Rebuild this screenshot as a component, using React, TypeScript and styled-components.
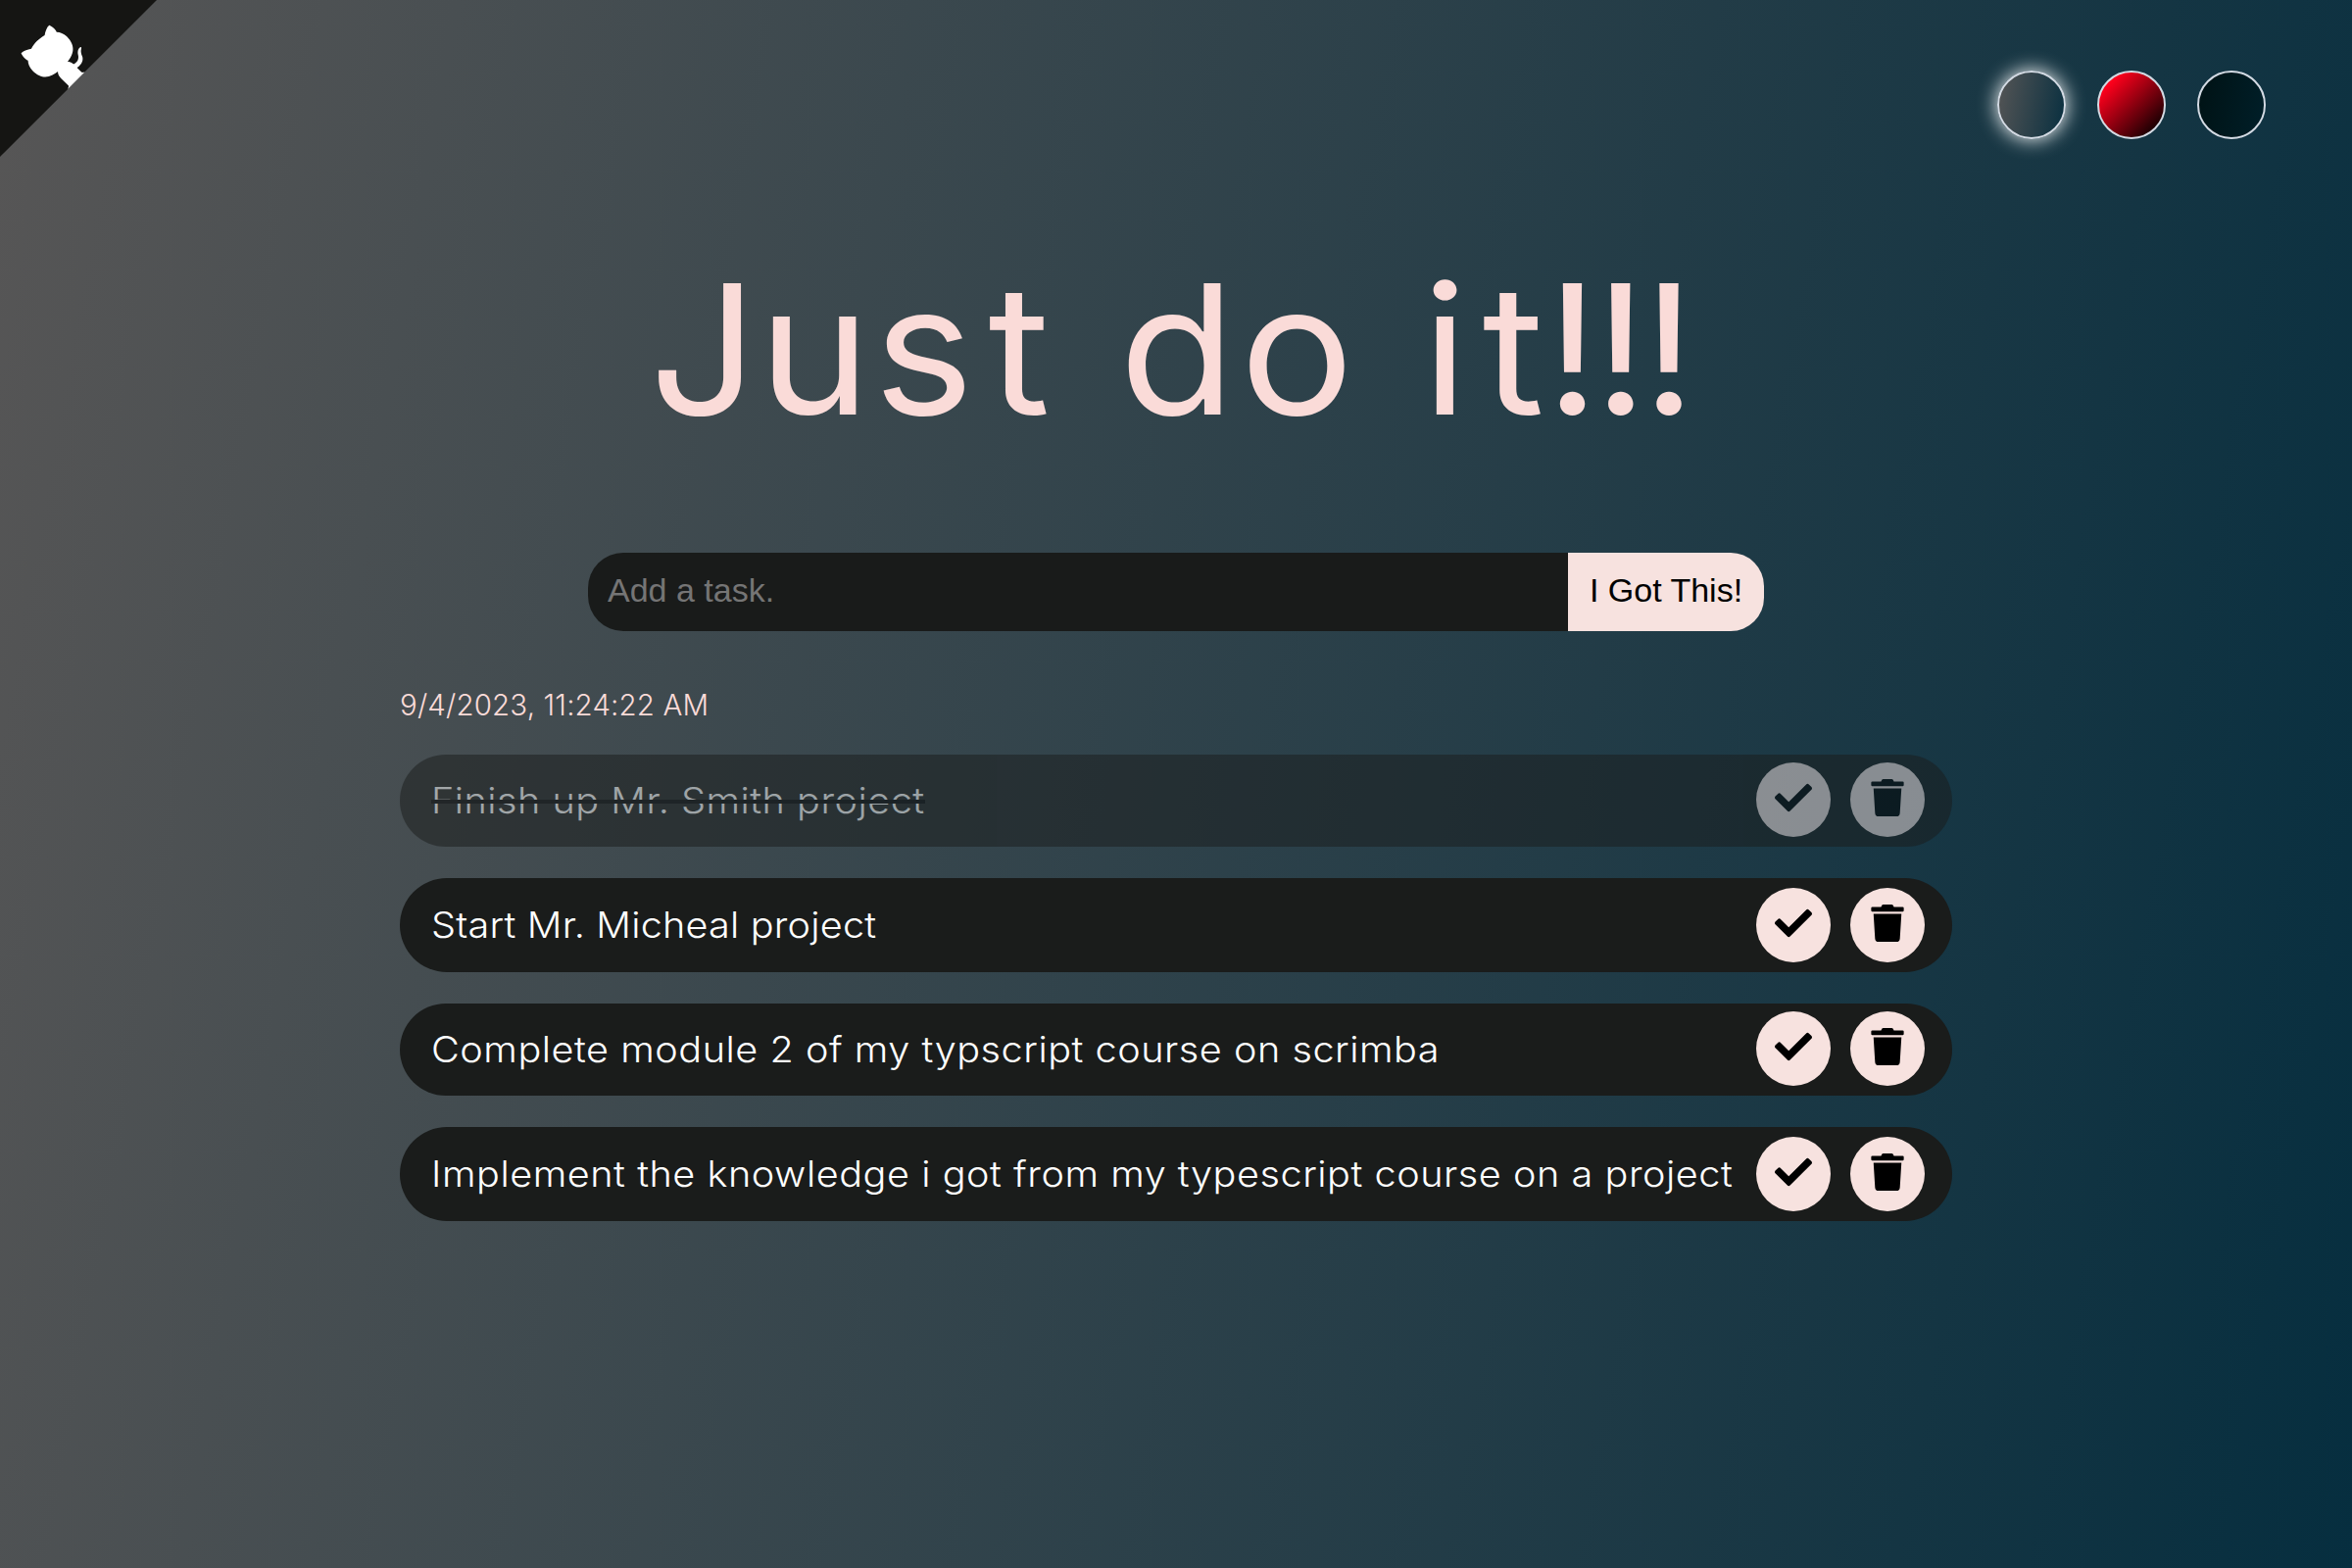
import React, { useState } from "react";
import styled, { createGlobalStyle, css } from "styled-components";
import { FaCheck, FaTrash } from "react-icons/fa";

const GlobalStyle = createGlobalStyle`
  *, *::before, *::after { box-sizing: border-box; }
  body { margin: 0; }
`;

const palette = {
  card: "#1a1c1b",
  field: "#191b1a",
  blush: "#f7e2df",
  title: "#fadbd8",
};

const Page = styled.div`
  position: relative;
  display: flex;
  flex-direction: column;
  align-items: center;
  width: 100%;
  height: 1600px;
  overflow: hidden;
  background: linear-gradient(100deg, #575656, #062e3f);
  font-family: Inter, "Liberation Sans", sans-serif;
`;

const CornerLink = styled.a`
  position: absolute;
  top: 0;
  left: 0;
  line-height: 0;

  svg {
    width: 160px;
    height: 160px;
    fill: #151513;
    color: #fff;
    transform: scale(-1, 1);
  }
`;

const ThemeBar = styled.nav`
  display: flex;
  justify-content: flex-end;
  gap: 32px;
  width: 100%;
  padding: 72px 88px 0;
`;

const ThemeDot = styled.button<{ $fill: string; $active: boolean }>`
  width: 70px;
  height: 70px;
  padding: 0;
  border: 2px solid #d3dae3;
  border-radius: 50%;
  background: ${(p) => p.$fill};
  background-origin: border-box;
  ${(p) =>
    p.$active &&
    css`
      box-shadow: 0 0 20px #fff;
    `}
`;

const Title = styled.h1`
  display: flex;
  margin: 103px 13px 97px 0;
  color: ${palette.title};
  font-size: 184px;
  font-weight: 400;
  line-height: 222px;
  white-space: pre;
  transform: scaleX(1.05);
`;

const Word = styled.span<{ $tracking: number; $offset?: number }>`
  margin-left: ${(p) => p.$offset ?? 0}px;
  letter-spacing: ${(p) => p.$tracking}px;
`;

const TaskForm = styled.form`
  display: flex;
  width: 1200px;
  height: 80px;
`;

const TaskInput = styled.input`
  flex: 1;
  min-width: 0;
  padding: 0 20px 4px;
  border: 0;
  border-radius: 36px 0 0 36px;
  outline: 0;
  background: ${palette.field};
  color: #fff;
  font: 34px "Liberation Sans", Arial, sans-serif;

  &::placeholder {
    color: #757575;
  }
`;

const SubmitButton = styled.button`
  width: 200px;
  padding: 0 0 4px;
  border: 0;
  border-radius: 0 34px 34px 0;
  background: ${palette.blush};
  color: #000;
  font: 34px "Liberation Sans", Arial, sans-serif;
`;

const Board = styled.section`
  width: 1584px;
  margin-top: 57px;
`;

const Timestamp = styled.p`
  margin: 0 0 33px;
  color: ${palette.title};
  font-size: 29.5px;
  font-weight: 300;
  line-height: 36px;
  letter-spacing: 0.15px;
`;

const TaskList = styled.ul`
  display: flex;
  flex-direction: column;
  gap: 32px;
  margin: 0;
  padding: 0;
  list-style: none;
`;

const Actions = styled.div`
  display: flex;
  gap: 20px;
  align-self: flex-start;
  margin-left: auto;
  padding-top: 8px;
`;

const TaskRow = styled.li<{ $done: boolean }>`
  display: flex;
  align-items: center;
  height: 94px;
  padding: 0 28px 0 32px;
  border-radius: 48px;
  background: ${palette.card};
  opacity: ${(p) => (p.$done ? 0.5 : 1)};

  &:nth-child(even) {
    height: 96px;
  }

  &:nth-child(even) ${Actions} {
    padding-top: 10px;
  }
`;

const TaskText = styled.span<{ $tracking: number; $struck: boolean }>`
  position: relative;
  color: #fff;
  font-size: 37px;
  font-weight: 300;
  line-height: 44px;
  letter-spacing: ${(p) => p.$tracking}px;
  white-space: nowrap;
  transform: scaleX(1.07);
  transform-origin: left center;

  ${(p) =>
    p.$struck &&
    css`
      &::after {
        content: "";
        position: absolute;
        top: 21px;
        left: 0;
        right: 0;
        height: 4px;
        background: #000;
      }
    `}
`;

const RoundButton = styled.button`
  display: flex;
  align-items: center;
  justify-content: center;
  width: 76px;
  height: 76px;
  padding: 0 0 4px;
  border: 0;
  border-radius: 50%;
  background: ${palette.blush};
  color: #000;
  font-size: 38px;
`;

const themes = [
  { name: "standard", fill: "linear-gradient(100deg, #575656, #062e3f)" },
  { name: "red", fill: "linear-gradient(135deg, #ff001c 18%, #000 92%)" },
  { name: "darker", fill: "linear-gradient(100deg, #001214, #001f29)" },
];

const initialTasks = [
  { text: "Finish up Mr. Smith project", done: true, tracking: 0.47 },
  { text: "Start Mr. Micheal project", done: false, tracking: 0.19 },
  { text: "Complete module 2 of my typscript course on scrimba", done: false, tracking: 0.5 },
  {
    text: "Implement the knowledge i got from my typescript course on a project",
    done: false,
    tracking: 0.51,
  },
];

function GithubCorner() {
  return (
    <CornerLink aria-label="View source on GitHub">
      <svg viewBox="0 0 250 250" aria-hidden="true">
        <path d="M0,0 L115,115 L130,115 L142,142 L250,250 L250,0 Z" />
        <path
          fill="currentColor"
          d="M128.3,109.0 C113.8,99.7 119.0,89.6 119.0,89.6 C122.0,82.7 120.5,78.6 120.5,78.6 C119.2,72.0 123.4,76.3 123.4,76.3 C127.3,80.9 125.5,87.3 125.5,87.3 C122.9,97.6 130.6,101.9 134.4,103.2"
        />
        <path
          fill="currentColor"
          d="M115.0,115.0 C114.9,115.1 118.7,116.5 119.8,115.4 L133.7,101.6 C136.9,99.2 139.9,98.4 142.2,98.6 C133.8,88.0 127.5,74.4 143.8,58.0 C148.5,53.4 154.0,51.2 159.7,51.0 C160.3,49.4 163.2,43.6 171.4,40.1 C171.4,40.1 176.1,42.5 178.8,56.2 C183.1,58.6 187.2,61.8 190.9,65.4 C194.5,69.0 197.7,73.2 200.1,77.6 C213.8,80.2 216.3,84.9 216.3,84.9 C212.7,93.1 206.9,96.0 205.4,96.6 C205.1,102.4 203.0,107.8 198.3,112.5 C181.9,128.9 168.3,122.5 157.7,114.1 C157.9,116.9 156.7,120.9 152.7,124.9 L141.0,136.5 C139.8,137.7 141.6,141.9 141.8,141.8 Z"
        />
      </svg>
    </CornerLink>
  );
}

export default function App() {
  const [theme, setTheme] = useState("standard");
  const [tasks, setTasks] = useState(initialTasks);
  const [draft, setDraft] = useState("");

  const addTask = (event: React.FormEvent) => {
    event.preventDefault();
    if (!draft.trim()) return;
    setTasks([...tasks, { text: draft, done: false, tracking: 0.5 }]);
    setDraft("");
  };

  return (
    <>
      <GlobalStyle />
      <Page>
        <GithubCorner />
        <ThemeBar>
          {themes.map((t) => (
            <ThemeDot
              key={t.name}
              $fill={t.fill}
              $active={t.name === theme}
              aria-label={t.name}
              onClick={() => setTheme(t.name)}
            />
          ))}
        </ThemeBar>
        <Title>
          <Word $tracking={1} $offset={1}>Ju</Word>
          <Word $tracking={14} $offset={2}>{"st "}</Word>
          <Word $tracking={4.8} $offset={-12.4}>{"do "}</Word>
          <Word $tracking={14} $offset={5}>it</Word>
          <Word $tracking={-6} $offset={-13}>!!!</Word>
        </Title>
        <TaskForm onSubmit={addTask}>
          <TaskInput
            placeholder="Add a task."
            value={draft}
            onChange={(e) => setDraft(e.target.value)}
          />
          <SubmitButton type="submit">I Got This!</SubmitButton>
        </TaskForm>
        <Board>
          <Timestamp>9/4/2023, 11:24:22 AM</Timestamp>
          <TaskList>
            {tasks.map((task, index) => (
              <TaskRow key={index} $done={task.done}>
                <TaskText $tracking={task.tracking} $struck={task.done}>
                  {task.text}
                </TaskText>
                <Actions>
                  <RoundButton
                    aria-label="Complete"
                    onClick={() =>
                      setTasks(tasks.map((t, i) => (i === index ? { ...t, done: !t.done } : t)))
                    }
                  >
                    <FaCheck />
                  </RoundButton>
                  <RoundButton
                    aria-label="Delete"
                    onClick={() => setTasks(tasks.filter((_, i) => i !== index))}
                  >
                    <FaTrash />
                  </RoundButton>
                </Actions>
              </TaskRow>
            ))}
          </TaskList>
        </Board>
      </Page>
    </>
  );
}
